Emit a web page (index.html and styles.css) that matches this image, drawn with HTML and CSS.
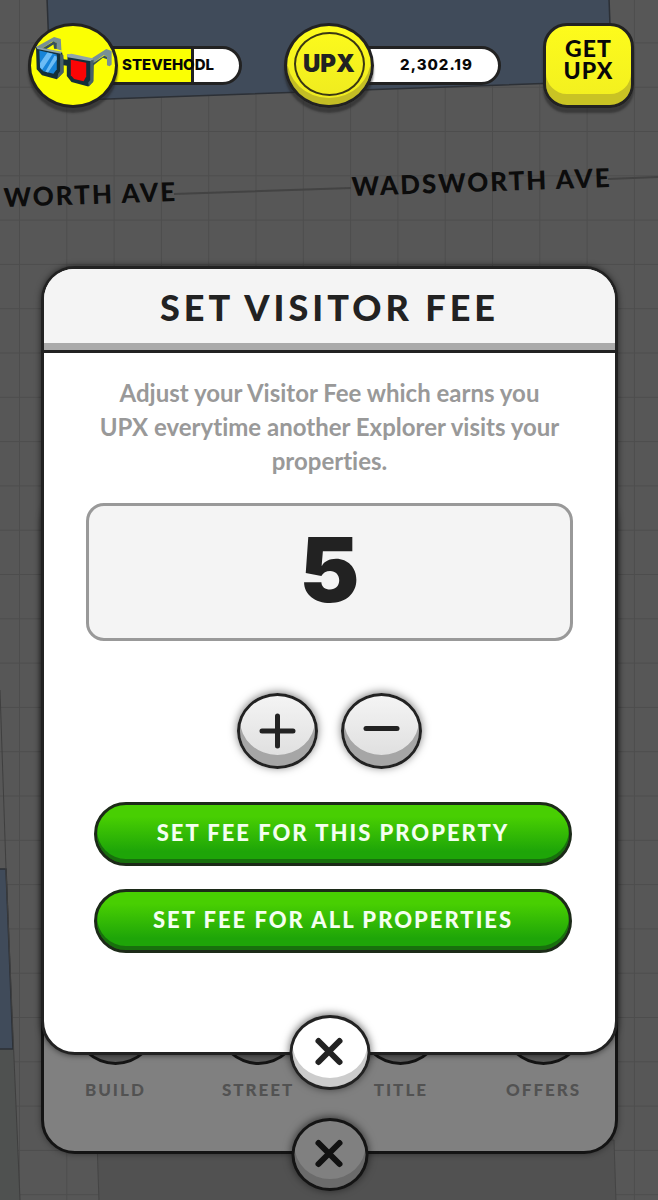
FILE: index.html
```html
<!DOCTYPE html>
<html lang="en">
<head>
    <meta charset="UTF-8">
    <meta name="viewport" content="width=device-width, initial-scale=1.0">
    <title>Set Visitor Fee</title>
    <link rel="stylesheet" href="styles.css">
</head>
<body>

<!-- City map behind the panels -->
<svg class="map" viewBox="0 0 658 1200" preserveAspectRatio="xMidYMin slice" aria-hidden="true">
    <defs>
        <pattern id="grid" x="19" y="131" width="47.3" height="44.3" patternUnits="userSpaceOnUse">
            <path d="M0.5 0V44.3M0 0.5H47.3" fill="none" stroke="#4d4d4d" stroke-width="1"/>
        </pattern>
    </defs>
    <rect width="658" height="1200" fill="#575757"/>
    <rect width="658" height="1200" fill="url(#grid)"/>
    <path d="M47 -2L51 101L612 81L609 -2Z" fill="#404b5a" stroke="#2c3036" stroke-width="1.5"/>
    <path d="M-2 869H6L20 1202H-2Z" fill="#4f5150"/>
    <path d="M-2 869H6L13 1049H-2Z" fill="#404b5a" stroke="#2c3036" stroke-width="1.5"/>
    <path d="M0 690L6 869L20 1200" fill="none" stroke="#3f3f3f"/>
    <path d="M97 1140H614L616 1202H99Z" fill="#515151" stroke="#454545"/>
    <path d="M174 194L351 188M608 179L658 177" stroke="#434343" stroke-width="2"/>
    <text class="street" transform="translate(4 207) rotate(-2)">WORTH AVE</text>
    <text class="street" transform="translate(352 196) rotate(-2)">WADSWORTH AVE</text>
</svg>

<header class="topbar">
    <div class="stat">
        <div class="badge avatar">
            <!-- 3D glasses -->
            <svg class="glasses" viewBox="94 110 248 170" aria-hidden="true">
                <path d="M106 140L160 110L180 116L182 150L168 146L166 126L154 124L122 146Z" fill="#789096"/>
                <path d="M122 146L158 123L168 128V146L160 145L158 132L134 148Z" fill="#36505a"/>
                <path d="M268 176L316 146L332 152V192L326 197L318 194V168L308 164L276 188Z" fill="#789096"/>
                <path d="M276 188L310 166L318 169V176L306 172L276 196Z" fill="#36505a"/>
                <path d="M106 140L184 156L188 176L200 178V162L272 178L278 188L276 244L262 258L212 244L198 226V196L188 194V216L168 236L124 224L108 206Z" fill="#143039"/>
                <path d="M106 138L120 142L184 154L180 160L110 146Z" fill="#8fa5aa"/>
                <path d="M198 162L212 160L278 174L270 182L200 170Z" fill="#8fa5aa"/>
                <path d="M178 160L188 164V216L170 234L172 220L178 212Z" fill="#47616a"/>
                <path d="M268 182L278 178V242L264 258L262 246L268 238Z" fill="#47616a"/>
                <path d="M116 150L168 162V206L158 220L128 212L118 202Z" fill="#1684d8"/>
                <path d="M140 156L156 160L124 208L118 200V188ZM161 166L168 168V178L142 216L134 214Z" fill="#6bbcf5"/>
                <path d="M210 178L256 187V228L248 242L220 235L210 224Z" fill="#fb0505"/>
            </svg>
        </div>
        <div class="pill name-pill">
            <div class="progress" style="width: 65%"></div>
            <span class="name">STEVEHODL</span>
        </div>
    </div>
    <div class="stat">
        <div class="badge coin"><span class="coin-face">UPX</span></div>
        <div class="pill balance-pill">2,302.19</div>
    </div>
    <button class="get-upx" type="button">GET UPX</button>
</header>

<main class="stage">
    <section class="sheet">
        <nav class="menu">
            <a class="menu-item" href="#build"><span class="menu-icon"></span>BUILD</a>
            <a class="menu-item" href="#street"><span class="menu-icon"></span>STREET</a>
            <a class="menu-item" href="#title"><span class="menu-icon"></span>TITLE</a>
            <a class="menu-item" href="#offers"><span class="menu-icon"></span>OFFERS</a>
        </nav>
        <button class="round-button close sheet-close" type="button" aria-label="Close menu">
            <svg class="icon" viewBox="0 0 40 40"><path d="M9 8L30 29M30 8L9 29"/></svg>
        </button>
    </section>

    <section class="modal" role="dialog" aria-labelledby="modal-title">
        <h1 class="modal-title" id="modal-title">SET VISITOR FEE</h1>
        <form class="modal-body">
            <label class="description" for="fee">Adjust your Visitor Fee which earns you UPX everytime another Explorer visits your properties.</label>
            <input class="fee" type="text" inputmode="numeric" id="fee" value="5">
            <div class="steppers">
                <button class="round-button" type="button" aria-label="Increase fee" onclick="changeFee(1)">
                    <svg class="icon" viewBox="0 0 40 40"><path d="M4 20H35M19.500 5V35"/></svg>
                </button>
                <button class="round-button" type="button" aria-label="Decrease fee" onclick="changeFee(-1)">
                    <svg class="icon" viewBox="0 0 40 40"><path d="M4 17.500H35"/></svg>
                </button>
            </div>
            <div class="actions">
                <button class="set-fee" type="button">SET FEE FOR THIS PROPERTY</button>
                <button class="set-fee" type="button">SET FEE FOR ALL PROPERTIES</button>
            </div>
        </form>
        <button class="round-button close modal-close" type="button" aria-label="Close">
            <svg class="icon" viewBox="0 0 40 40"><path d="M9 8L30 29M30 8L9 29"/></svg>
        </button>
    </section>
</main>

<script>
    function changeFee(step) {
        const fee = document.getElementById('fee');
        const current = parseInt(fee.value, 10) || 0;
        fee.value = Math.max(0, current + step);
    }
</script>

</body>
</html>
```
FILE: styles.css
```css
* {
    box-sizing: border-box;
}

body {
    font-family: Lato, 'Open Sans', sans-serif;
    margin: 0;
    min-height: 100vh;
    position: relative;
    background-color: #575757;
    color: #222;
}

button,
input {
    font-family: inherit;
    color: inherit;
    margin: 0;
    padding: 0;
}

button {
    cursor: pointer;
}

/* Map */
.map {
    position: absolute;
    top: 0;
    left: 0;
    width: 100%;
    height: 100%;
}

.street {
    font-size: 26px;
    font-weight: 900;
    letter-spacing: 2px;
    fill: #0c0c0c;
}

/* Top bar */
.topbar {
    position: relative;
    display: flex;
    justify-content: space-between;
    align-items: center;
    padding: 23px 24px 0 28px;
}

.stat {
    display: flex;
    align-items: center;
}

.badge {
    position: relative;
    z-index: 1;
    display: flex;
    justify-content: center;
    align-items: center;
    width: 90px;
    height: 85px;
    border: 3px solid #222;
    border-radius: 50%;
    background-color: #fbff03;
    box-shadow: 0 5px 2px rgba(30, 30, 30, 0.5);
}

.glasses {
    width: 83px;
    height: 57px;
}

.coin {
    padding-bottom: 4px;
    background: linear-gradient(#fdfb1c, #eeea20);
    box-shadow: inset 0 -7px 0 #c3bd25, 0 5px 2px rgba(30, 30, 30, 0.5);
}

.coin-face {
    display: flex;
    justify-content: center;
    align-items: center;
    width: 71px;
    height: 64px;
    border: 2px solid #3a3713;
    border-radius: 50%;
    font-family: Inter, sans-serif;
    font-size: 24px;
    font-weight: 900;
}

.pill {
    display: grid;
    align-items: center;
    height: 39px;
    margin-left: -12px;
    border: 3px solid #222;
    border-radius: 0 20px 20px 0;
    background-color: #fff;
    color: #080808;
    font-family: Inter, sans-serif;
    font-size: 15px;
    font-weight: 800;
    overflow: hidden;
}

.name-pill {
    width: 136px;
}

.progress,
.name {
    grid-area: 1 / 1;
}

.progress {
    height: 100%;
    background-color: #fbff03;
    border-right: 3px solid #222;
}

.name {
    padding: 0 0 2px 13px;
}

.balance-pill {
    width: 139px;
    padding: 0 0 2px 10px;
    justify-content: center;
    letter-spacing: 1px;
}

.get-upx {
    width: 91px;
    height: 85px;
    padding: 0 14px 14px;
    border: 3px solid #222;
    border-radius: 24px;
    background: linear-gradient(#fdfb1c, #f2ef20);
    box-shadow: inset 0 -11px 0 #c9c324, 0 5px 2px rgba(30, 30, 30, 0.5);
    color: #080808;
    font-size: 23px;
    font-weight: 900;
    line-height: 22px;
    letter-spacing: 1px;
}

/* Both panels share one grid cell, the modal lies on the sheet */
.stage {
    position: relative;
    display: grid;
    margin: 158px 40px 46px 41px;
}

.sheet,
.modal {
    grid-area: 1 / 1;
    position: relative;
    border: 3px solid #222;
    border-radius: 34px;
}

.sheet {
    margin-top: 224px;
    display: flex;
    flex-direction: column;
    justify-content: flex-end;
    padding-bottom: 50px;
    background-color: #808080;
    border-color: #141414;
    box-shadow: 0 0 6px rgba(0, 0, 0, 0.4);
}

.menu {
    display: grid;
    grid-template-columns: repeat(4, 1fr);
}

.menu-item {
    display: flex;
    flex-direction: column;
    align-items: center;
    gap: 14px;
    color: #525252;
    font-size: 17px;
    font-weight: 900;
    line-height: 22px;
    letter-spacing: 2px;
    text-decoration: none;
}

.menu-icon {
    width: 81px;
    height: 76px;
    border: 3px solid #141414;
    border-radius: 50%;
    background-color: #595959;
}

.modal {
    margin-bottom: 99px;
    background-color: #fff;
    box-shadow: 0 0 6px rgba(0, 0, 0, 0.6);
}

.modal-title {
    margin: 0;
    padding: 16px 0 21px;
    border-bottom: 3px solid #222;
    border-radius: 30px 30px 0 0;
    background-color: #f4f4f4;
    box-shadow: inset 0 -7px 0 #aaa;
    font-size: 36px;
    font-weight: 900;
    line-height: 44px;
    letter-spacing: 4px;
    text-align: center;
}

.modal-body {
    display: flex;
    flex-direction: column;
    padding: 23px 42px 99px;
}

.description {
    padding: 0 10px;
    color: #999;
    font-size: 24px;
    font-weight: 700;
    font-variant-ligatures: none;
    line-height: 34px;
    text-align: center;
}

.fee {
    width: 100%;
    height: 138px;
    margin-top: 25px;
    padding-bottom: 6px;
    border: 3px solid #999;
    border-radius: 18px;
    background-color: #f4f4f4;
    font-family: Inter, sans-serif;
    font-size: 90px;
    font-weight: 900;
    text-align: center;
}

.steppers {
    display: flex;
    justify-content: center;
    gap: 23px;
    margin-top: 52px;
}

.round-button {
    display: flex;
    justify-content: center;
    align-items: center;
    width: 81px;
    height: 76px;
    border: 3px solid #222;
    border-radius: 50%;
    background: linear-gradient(#f4f4f4, #dcdcdc);
    box-shadow: inset 0 -11px 0 #a6a6a6, 0 -1px 8px rgba(0, 0, 0, 0.5);
}

.icon {
    width: 40px;
    height: 40px;
    fill: none;
    stroke: #222;
    stroke-width: 5;
    stroke-linecap: round;
}

.actions {
    display: flex;
    flex-direction: column;
    gap: 23px;
    margin-top: 33px;
    padding: 0 1px 0 8px;
}

.set-fee {
    height: 64px;
    padding-bottom: 4px;
    border: 3px solid #1c2a18;
    border-radius: 32px;
    background: linear-gradient(#48cf02 20%, #1ea508 80%);
    box-shadow: inset 0 -4px 0 #18700d;
    color: #f4fff0;
    font-size: 22px;
    font-weight: 900;
    letter-spacing: 2px;
}

/* Close buttons hang over the bottom edge of their panel */
.close {
    position: absolute;
    left: 50%;
    transform: translateX(-50%);
}

.close .icon {
    stroke-width: 6;
}

.modal-close {
    bottom: -38px;
    height: 75px;
    background: #fff;
    box-shadow: inset 0 -9px 0 #ccc, 0 -1px 8px rgba(0, 0, 0, 0.6);
}

.sheet-close {
    bottom: -40px;
    width: 77px;
    height: 73px;
    border-color: #141414;
    background: #808080;
    box-shadow: inset 0 -9px 0 #6b6b6b, 0 -1px 8px rgba(0, 0, 0, 0.6);
}

.sheet-close .icon {
    stroke: #111;
}
```
